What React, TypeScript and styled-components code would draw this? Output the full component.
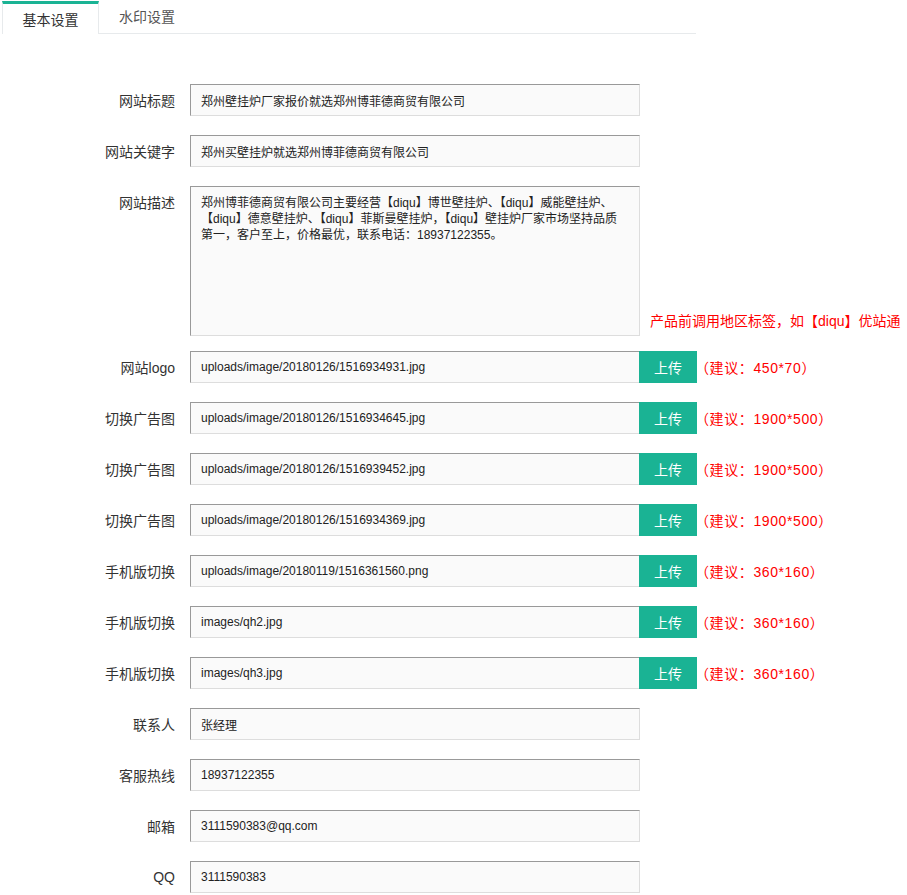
import React from "react"
import styled, { createGlobalStyle } from "styled-components"

const GlobalStyle = createGlobalStyle`
  body {
    margin: 0;
    background: #fff;
    font-family: "Liberation Sans", "Noto Sans CJK SC", sans-serif;
    color: #333;
  }
`

const green = "#1ab394"

const Page = styled.div`
  padding: 1px 0 0 2px;
  width: 905px;
`

const TabBar = styled.div`
  display: flex;
  align-items: flex-start;
  width: 694px;
  height: 32px;
  border-bottom: 1px solid #e7eaec;
`

const Tab = styled.div<{ $active?: boolean }>`
  width: ${(p) => (p.$active ? "95px" : "96px")};
  height: ${(p) => (p.$active ? "30px" : "29px")};
  display: flex;
  align-items: center;
  justify-content: center;
  font-size: 14px;
  color: ${(p) => (p.$active ? "#333" : "#555")};
  border-top: ${(p) => (p.$active ? `3px solid ${green}` : "none")};
  border-left: ${(p) => (p.$active ? "1px solid #e7eaec" : "none")};
  border-right: ${(p) => (p.$active ? "1px solid #e7eaec" : "none")};
  background: ${(p) => (p.$active ? "#fff" : "transparent")};
  margin-bottom: ${(p) => (p.$active ? "-1px" : "0")};
  box-sizing: content-box;
`

const Form = styled.div`
  display: flex;
  flex-direction: column;
  gap: 19px;
  padding-top: 50px;
  margin-left: -2px;
`

const Row = styled.div<{ $bottom?: boolean }>`
  display: flex;
  align-items: ${(p) => (p.$bottom ? "flex-start" : "center")};
  margin-bottom: ${(p) => (p.$bottom ? "-4px" : "0")};
`

const Label = styled.label<{ $top?: boolean }>`
  width: 175px;
  text-align: right;
  font-size: 14px;
  color: #333;
  margin-right: 15px;
  align-self: ${(p) => (p.$top ? "flex-start" : "center")};
  padding-top: ${(p) => (p.$top ? "6px" : "0")};
`

const Field = styled.div`
  box-sizing: border-box;
  width: 450px;
  height: 32px;
  background: #fafafa;
  border: 1px solid #ddd;
  border-top-color: #999;
  border-left-color: #999;
  font-size: 12px;
  color: #222;
  padding: 0 10px;
  display: flex;
  align-items: center;
`

const Area = styled(Field)`
  height: 150px;
  align-items: flex-start;
  padding: 8px 10px;
  line-height: 16px;
`

const Upload = styled.button`
  width: 58px;
  height: 32px;
  border: none;
  background: ${green};
  color: #fff;
  font-size: 14px;
  font-family: inherit;
  margin-left: -1px;
  padding: 0;
`

const Hint = styled.span<{ $end?: boolean }>`
  color: #f00;
  font-size: 14px;
  margin-left: ${(p) => (p.$end ? "10px" : "-2px")};
  align-self: ${(p) => (p.$end ? "flex-end" : "center")};
  padding-bottom: ${(p) => (p.$end ? "6px" : "0")};
  letter-spacing: ${(p) => (p.$end ? "0" : "0.6px")};
  white-space: nowrap;
`

const uploads = [
  ["网站logo", "uploads/image/20180126/1516934931.jpg", "（建议：450*70）"],
  ["切换广告图", "uploads/image/20180126/1516934645.jpg", "（建议：1900*500）"],
  ["切换广告图", "uploads/image/20180126/1516939452.jpg", "（建议：1900*500）"],
  ["切换广告图", "uploads/image/20180126/1516934369.jpg", "（建议：1900*500）"],
  ["手机版切换", "uploads/image/20180119/1516361560.png", "（建议：360*160）"],
  ["手机版切换", "images/qh2.jpg", "（建议：360*160）"],
  ["手机版切换", "images/qh3.jpg", "（建议：360*160）"],
]

const contacts = [
  ["联系人", "张经理"],
  ["客服热线", "18937122355"],
  ["邮箱", "3111590383@qq.com"],
  ["QQ", "3111590383"],
]

export default function App() {
  return (
    <Page>
      <GlobalStyle />
      <TabBar>
        <Tab $active>基本设置</Tab>
        <Tab>水印设置</Tab>
      </TabBar>
      <Form>
        <Row>
          <Label>网站标题</Label>
          <Field>郑州壁挂炉厂家报价就选郑州博菲德商贸有限公司</Field>
        </Row>
        <Row>
          <Label>网站关键字</Label>
          <Field>郑州买壁挂炉就选郑州博菲德商贸有限公司</Field>
        </Row>
        <Row $bottom>
          <Label $top>网站描述</Label>
          <Area>
            郑州博菲德商贸有限公司主要经营【diqu】博世壁挂炉、【diqu】威能壁挂炉、【diqu】德意壁挂炉、【diqu】菲斯曼壁挂炉，【diqu】壁挂炉厂家市场坚持品质第一，客户至上，价格最优，联系电话：18937122355。
          </Area>
          <Hint $end>产品前调用地区标签，如【diqu】优站通</Hint>
        </Row>
        {uploads.map(([label, value, hint], i) => (
          <Row key={i}>
            <Label>{label}</Label>
            <Field>{value}</Field>
            <Upload>上传</Upload>
            <Hint>{hint}</Hint>
          </Row>
        ))}
        {contacts.map(([label, value]) => (
          <Row key={label}>
            <Label>{label}</Label>
            <Field>{value}</Field>
          </Row>
        ))}
      </Form>
    </Page>
  )
}
